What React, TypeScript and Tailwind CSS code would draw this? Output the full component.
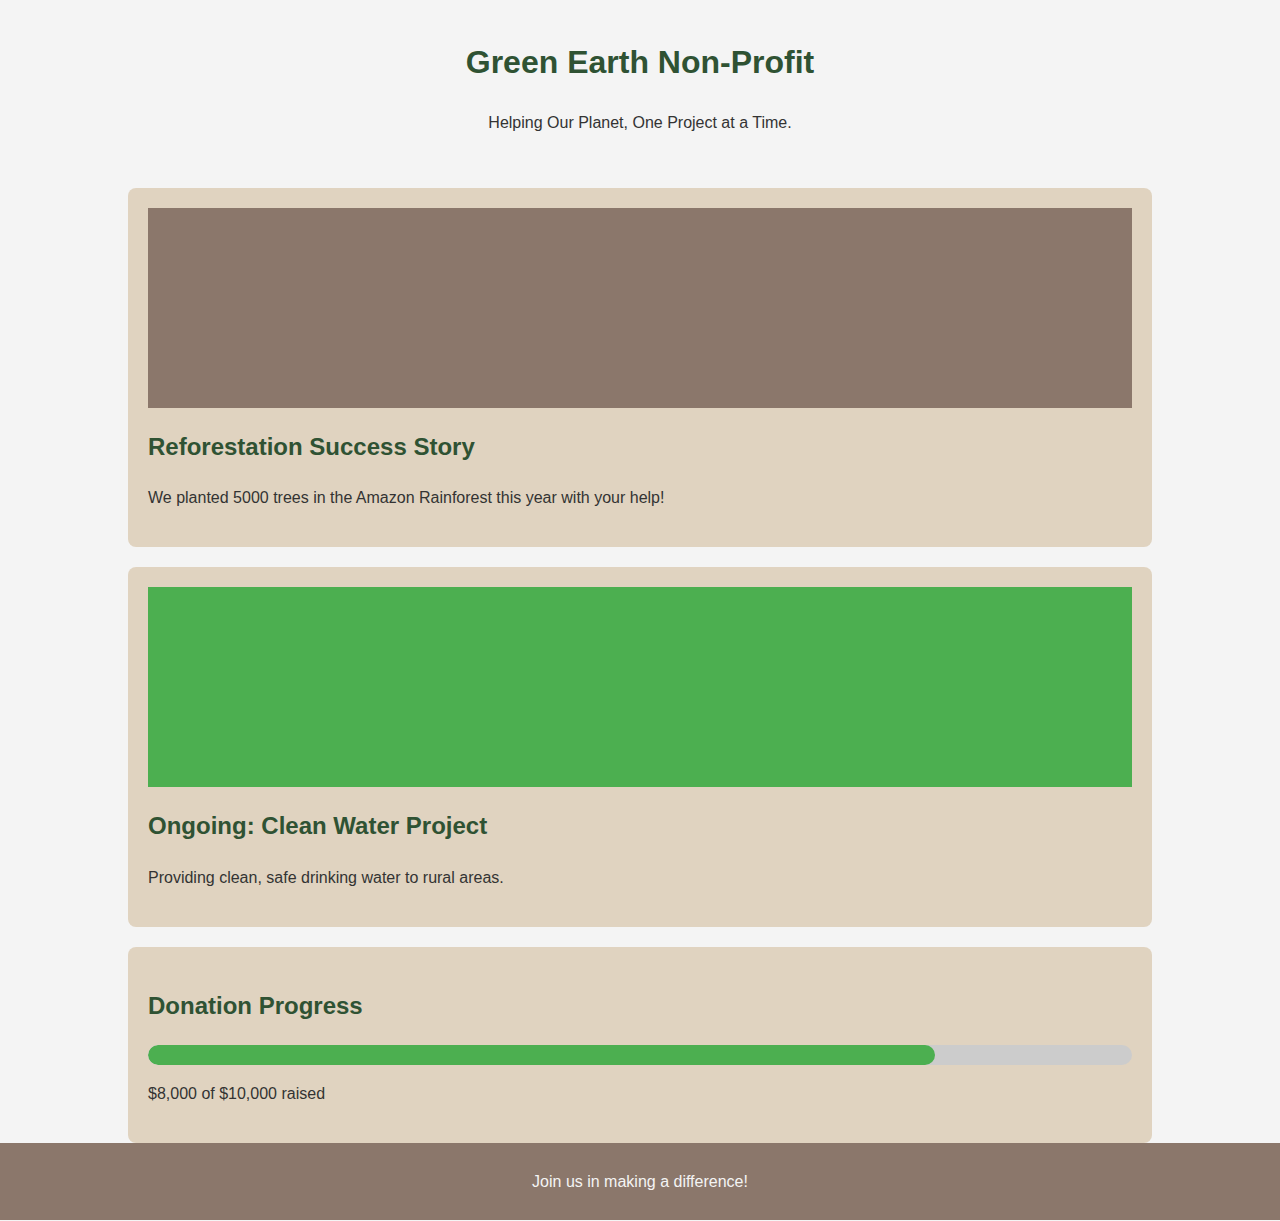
export default function App() {
  return (
    <div className="min-h-screen bg-[#f4f4f4] text-[#333333] font-['Liberation_Sans',Arial,sans-serif] text-base/[1.6]">
      {/* Header */}
      <header className="pt-4 pb-[15px] text-center">
        <h1 className="my-[21px] text-[32px]/[1.6] font-bold text-[#2f5233]">Green Earth Non-Profit</h1>
        <p className="mt-[22px] mb-4 text-base/[1.6]">Helping Our Planet, One Project at a Time.</p>
      </header>

      {/* Projects */}
      <main className="mx-auto max-w-[1024px] pt-[21px]">
        <section className="mb-5 rounded-lg bg-[#e0d3c0] p-5">
          <div className="h-[200px] w-full bg-[#8b776b]" />
          <h2 className="mt-5 mb-[19px] text-2xl/[1.6] font-bold text-[#2f5233]">Reforestation Success Story</h2>
          <p className="mt-[19px] mb-4 text-base/[1.6]">We planted 5000 trees in the Amazon Rainforest this year with your help!</p>
        </section>

        <section className="mb-5 rounded-lg bg-[#e0d3c0] p-5">
          <div className="h-[200px] w-full bg-[#4caf50]" />
          <h2 className="my-5 text-2xl/[1.6] font-bold text-[#2f5233]">Ongoing: Clean Water Project</h2>
          <p className="mt-5 mb-4 text-base/[1.6]">Providing clean, safe drinking water to rural areas.</p>
        </section>

        <section className="rounded-lg bg-[#e0d3c0] p-5">
          <h2 className="my-5 text-2xl/[1.6] font-bold text-[#2f5233]">Donation Progress</h2>
          <div className="h-5 w-full overflow-hidden rounded-[10px] bg-[#cccccc]">
            <div className="h-full rounded-[10px] bg-[#4caf50]" style={{ width: `${(8000 / 10000) * 100}%` }} />
          </div>
          <p className="mt-4 mb-4 text-base/[1.6]">$8,000 of $10,000 raised</p>
        </section>
      </main>

      {/* Footer */}
      <footer className="bg-[#8b776b] py-[26px] text-center text-[#f4f4f4]">
        <p className="text-base/[1.6]">Join us in making a difference!</p>
      </footer>
    </div>
  );
}
